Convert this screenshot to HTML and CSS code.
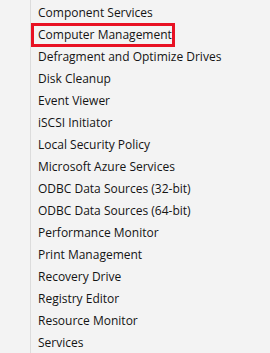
FILE: index.html
```html
<!DOCTYPE html>
<html>
<head>
<meta charset="utf-8">
<link rel="stylesheet" href="styles.css">
</head>
<body>
<div class="pane">
  <div class="gutter"></div>
  <ul class="list">
    <li class="item">Component Services</li>
    <li class="item selected">Computer Management</li>
    <li class="item">Defragment and Optimize Drives</li>
    <li class="item">Disk Cleanup</li>
    <li class="item">Event Viewer</li>
    <li class="item">iSCSI Initiator</li>
    <li class="item">Local Security Policy</li>
    <li class="item">Microsoft Azure Services</li>
    <li class="item">ODBC Data Sources (32-bit)</li>
    <li class="item">ODBC Data Sources (64-bit)</li>
    <li class="item">Performance Monitor</li>
    <li class="item">Print Management</li>
    <li class="item">Recovery Drive</li>
    <li class="item">Registry Editor</li>
    <li class="item">Resource Monitor</li>
    <li class="item">Services</li>
  </ul>
</div>
</body>
</html>
```
FILE: styles.css
```css
html, body {
  margin: 0;
  padding: 0;
  background: #f3f3f3;
  overflow: hidden;
}
.pane {
  display: flex;
  height: 353px;
  font-family: "Open Sans", "Noto Sans", sans-serif;
  font-size: 12px;
  color: #141414;
}
.gutter {
  width: 30px;
  flex: none;
  border-right: 1px solid #dcdcdc;
}
.list {
  list-style: none;
  margin: 0;
  padding: 2px 0 0 0;
  display: flex;
  flex-direction: column;
  align-items: flex-start;
}
.item {
  height: 22px;
  line-height: 22px;
  padding-left: 7px;
  white-space: nowrap;
  box-sizing: border-box;
}
.item.selected {
  position: relative;
  width: 144px;
}
.item.selected::after {
  content: "";
  position: absolute;
  left: 0;
  right: 0;
  top: -1px;
  bottom: -1px;
  border: 3px solid #e81123;
}
```
